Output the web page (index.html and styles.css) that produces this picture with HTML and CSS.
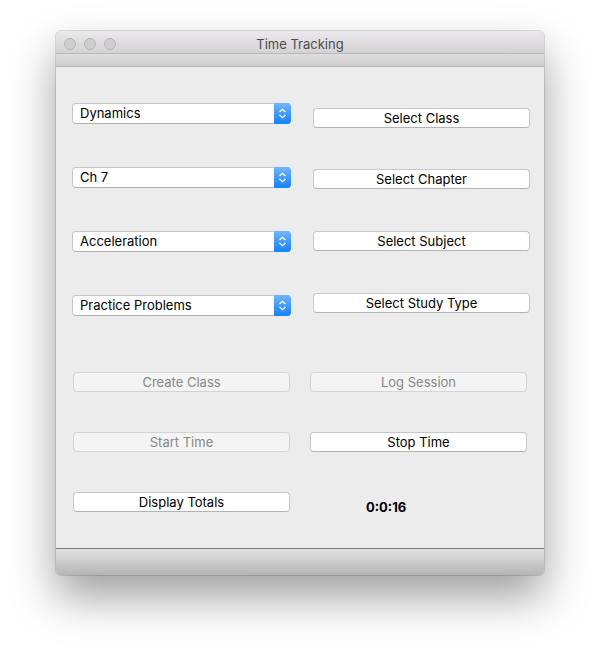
FILE: index.html
```html
<!DOCTYPE html>
<html>
<head>
<meta charset="utf-8">
<title>Time Tracking</title>
<link rel="stylesheet" href="styles.css">
</head>
<body>
<div class="window">
  <div class="titlebar">
    <div class="lights"><span class="light"></span><span class="light"></span><span class="light"></span></div>
    <div class="title">Time Tracking</div>
    <div></div>
  </div>
  <div class="toolbar"></div>
  <div class="content">
    <div class="col left">
      <div class="popup"><span class="label">Dynamics</span><span class="stepper"><svg width="17" height="21" viewBox="0 0 17 21"><path d="M5.5 9 L8.5 6.3 L11.5 9 M5.5 12 L8.5 14.7 L11.5 12" fill="none" stroke="#fff" stroke-width="1.3"/></svg></span></div>
      <div class="popup"><span class="label">Ch 7</span><span class="stepper"><svg width="17" height="21" viewBox="0 0 17 21"><path d="M5.5 9 L8.5 6.3 L11.5 9 M5.5 12 L8.5 14.7 L11.5 12" fill="none" stroke="#fff" stroke-width="1.3"/></svg></span></div>
      <div class="popup"><span class="label">Acceleration</span><span class="stepper"><svg width="17" height="21" viewBox="0 0 17 21"><path d="M5.5 9 L8.5 6.3 L11.5 9 M5.5 12 L8.5 14.7 L11.5 12" fill="none" stroke="#fff" stroke-width="1.3"/></svg></span></div>
      <div class="popup"><span class="label">Practice Problems</span><span class="stepper"><svg width="17" height="21" viewBox="0 0 17 21"><path d="M5.5 9 L8.5 6.3 L11.5 9 M5.5 12 L8.5 14.7 L11.5 12" fill="none" stroke="#fff" stroke-width="1.3"/></svg></span></div>
      <div class="btn disabled create">Create Class</div>
      <div class="btn disabled lower">Start Time</div>
      <div class="btn lower">Display Totals</div>
    </div>
    <div class="col right">
      <div class="btn">Select Class</div>
      <div class="btn chapter">Select Chapter</div>
      <div class="btn subject">Select Subject</div>
      <div class="btn subject">Select Study Type</div>
      <div class="btn disabled log">Log Session</div>
      <div class="btn stop">Stop Time</div>
      <div class="timer">0:0:16</div>
    </div>
  </div>
  <div class="statusbar"></div>
</div>
</body>
</html>
```

FILE: styles.css
```css
html, body {
  margin: 0;
  padding: 0;
  background: #ffffff;
}

body {
  font-family: Inter, "Helvetica Neue", "Liberation Sans", sans-serif;
  font-size: 13px;
  color: #000;
  min-height: 655px;
  padding: 31px 0 0 56px;
  box-sizing: border-box;
}

.window {
  width: 488px;
  height: 544px;
  display: flex;
  flex-direction: column;
  border-radius: 5px;
  overflow: hidden;
  background: #ececec;
  box-shadow: 0 22px 45px rgba(0, 0, 0, 0.38), 0 0 0 1px rgba(0, 0, 0, 0.12);
}

.titlebar {
  height: 22px;
  flex: none;
  background: linear-gradient(#ebe9eb, #d4d2d4);
  border-bottom: 1px solid #b9b9b9;
  display: grid;
  grid-template-columns: 1fr auto 1fr;
  align-items: center;
}

.lights {
  display: flex;
  gap: 8px;
  padding-left: 8px;
  padding-top: 1px;
}

.light {
  width: 12px;
  height: 12px;
  box-sizing: border-box;
  border-radius: 50%;
  background: #d0cfd0;
  border: 1px solid #b5b4b5;
}

.title {
  color: #4d4d4d;
  font-size: 13px;
  line-height: 22px;
  padding-top: 2px;
}

.toolbar {
  height: 12px;
  flex: none;
  background: linear-gradient(#dedede, #cdcdcd);
  border-bottom: 1px solid #b3b3b3;
}

.content {
  height: 481px;
  flex: none;
  display: flex;
  padding-left: 16px;
  background: #ececec;
}

.col {
  display: flex;
  flex-direction: column;
  align-items: flex-start;
}

.col.left {
  width: 219px;
  padding-top: 36px;
}

.col.right {
  width: 218px;
  margin-left: 22px;
  padding-top: 41px;
}

.popup {
  width: 219px;
  height: 21px;
  box-sizing: border-box;
  display: flex;
  background: #fff;
  border: 1px solid #c4c4c4;
  border-bottom-color: #b2b2b2;
  border-radius: 4px;
}

.popup + .popup {
  margin-top: 43px;
}

.label {
  flex: 1;
  padding-left: 7px;
  line-height: 19px;
}

.stepper {
  width: 17px;
  margin: -1px -1px -1px 0;
  border-radius: 0 4px 4px 0;
  background: linear-gradient(#6fb6fb, #1580fb);
  display: flex;
}

.btn {
  width: 217px;
  height: 20px;
  box-sizing: border-box;
  background: #fff;
  border: 1px solid #c8c8c8;
  border-bottom-color: #b3b3b3;
  border-radius: 4px;
  text-align: center;
  line-height: 18px;
  color: #000;
}

.btn.disabled {
  background: #f4f4f4;
  border-color: #d3d3d3;
  color: #888888;
}

.create {
  margin-top: 56px;
  margin-left: 1px;
}

.lower {
  margin-top: 40px;
  margin-left: 1px;
}

.chapter {
  margin-top: 41px;
}

.subject {
  margin-top: 42px;
}

.log {
  margin-top: 59px;
  margin-left: -3px;
}

.stop {
  margin-top: 40px;
  margin-left: -3px;
}

.timer {
  margin-top: 47px;
  margin-left: 53px;
  font-weight: 700;
  font-size: 13px;
  line-height: 16px;
}

.statusbar {
  height: 26px;
  flex: none;
  background: linear-gradient(#e2e2e2, #b5b5b5);
  border-top: 1px solid #7b7b7b;
}
```
